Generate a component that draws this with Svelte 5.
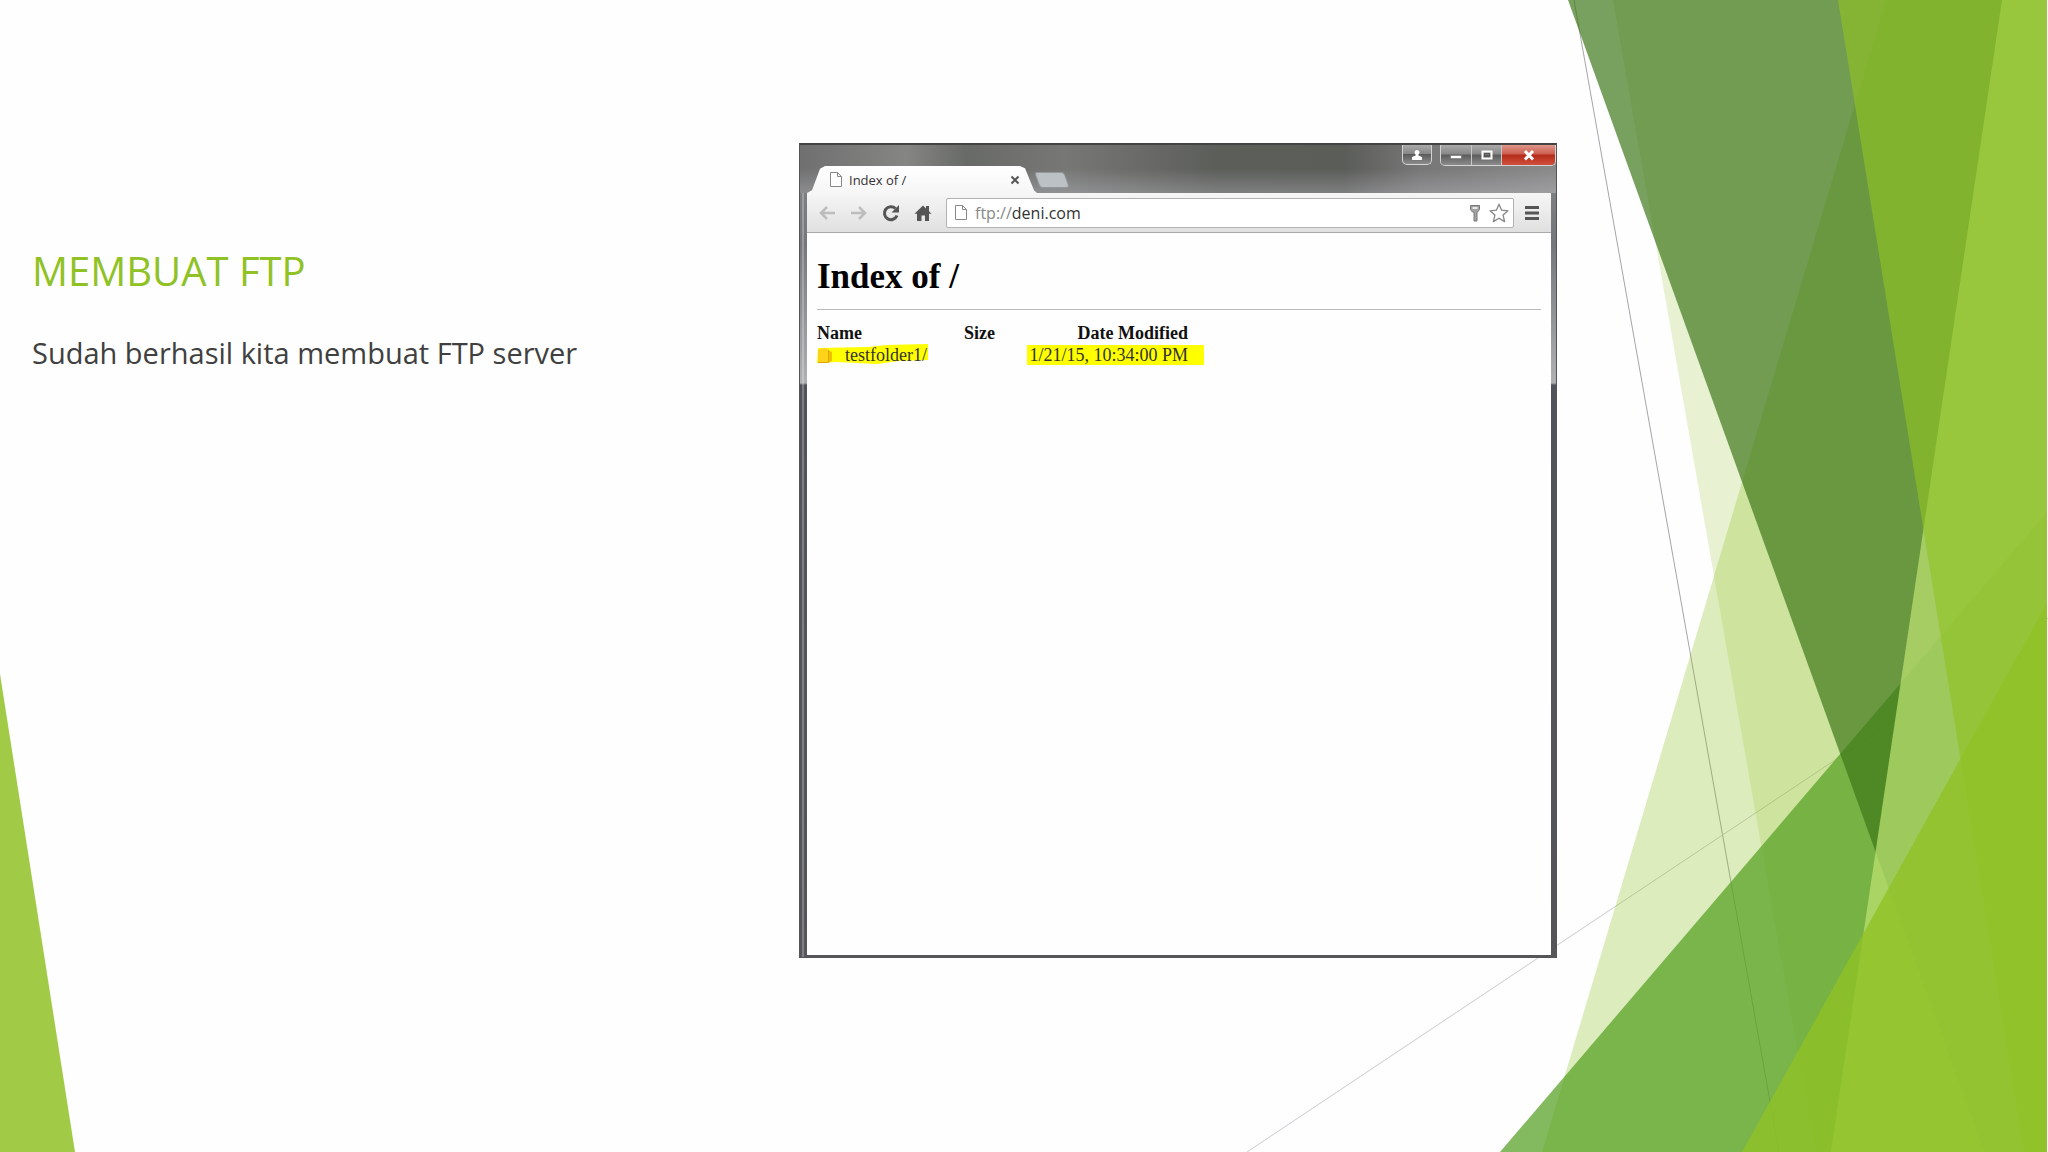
<script lang="ts">
  let address = $state('deni.com')

  const files = [
    { name: 'testfolder1/', size: '', modified: '1/21/15, 10:34:00 PM' },
  ]
</script>

{#snippet page()}
  <svg class="page-icon" viewBox="0 0 14 17" aria-hidden="true">
    <path d="M1.5 1.5h7l4 4v10h-11z M8.5 1.5v4h4" />
  </svg>
{/snippet}

<main class="slide">
  <svg class="facets" viewBox="0 0 2048 1152" preserveAspectRatio="none" aria-hidden="true">
    <path d="M1574 0L1779 1152" stroke="#a6a3aa" />
    <path d="M1247 1152L2048 618" stroke="#cdc9d0" />
    <path d="M1886 0H2047V1152H1542z" fill="#90c226" fill-opacity="0.3" />
    <path d="M1613 0H2047V1152H1815z" fill="#90c226" fill-opacity="0.2" />
    <path d="M1500 1152L2047 512V1152z" fill="#54a021" fill-opacity="0.72" />
    <path d="M1568 0H2047V1152H1984z" fill="#3f7819" fill-opacity="0.7" />
    <path d="M2002 0H2047V1152H1831z" fill="#c0e474" fill-opacity="0.7" />
    <path d="M1838 0H2047V1152H2024z" fill="#90c226" fill-opacity="0.65" />
    <path d="M1742 1152L2047 603V1152z" fill="#90c226" fill-opacity="0.8" />
    <path d="M0 674L75 1152H0z" fill="#90c226" fill-opacity="0.85" />
  </svg>

  <section class="copy">
    <h1>MEMBUAT FTP</h1>
    <p>Sudah berhasil kita membuat FTP server</p>
  </section>

  <section class="window">
    <header class="titlebar">
      <div class="tab">
        {@render page()}
        <span>Index of /</span>
        <button class="tab-close" aria-label="Close tab">
          <svg viewBox="0 0 10 10"><path d="M1.5 1.5l7 7m0-7l-7 7" /></svg>
        </button>
      </div>
      <button class="new-tab" aria-label="New tab"></button>
      <div class="controls">
        <button class="user" aria-label="User">
          <svg viewBox="0 0 12 12"><path d="M6 1a2.4 2.4 0 0 1 1.4 4.4v1.1l3.6 1.500v3H1V8l3.600-1.500V5.400A2.400 2.400 0 0 1 6 1z" fill="#fff" /></svg>
        </button>
        <div class="group">
          <button aria-label="Minimize">
            <svg viewBox="0 0 14 12"><path d="M1.5 6.5h11v3h-11z" fill="#fff" stroke="#666" stroke-width="0.5" /></svg>
          </button>
          <button aria-label="Maximize">
            <svg viewBox="0 0 14 12"><path d="M2.5 2.5h9v7h-9z" fill="none" stroke="#fff" stroke-width="2" /><path d="M4.5 4.5h5v3h-5z" fill="none" stroke="#555" /></svg>
          </button>
          <button class="close" aria-label="Close">
            <svg viewBox="0 0 14 12"><path d="M3 2l8 8.5M11 2l-8 8.5" stroke="#fff" stroke-width="3" /></svg>
          </button>
        </div>
      </div>
    </header>

    <div class="body">
      <nav class="toolbar">
        <button aria-label="Back">
          <svg viewBox="0 0 18 18"><path d="M17 9H3M9 3L3 9l6 6" fill="none" stroke="#bdbdbd" stroke-width="2.5" /></svg>
        </button>
        <button aria-label="Forward">
          <svg viewBox="0 0 18 18"><path d="M1 9h14M9 3l6 6-6 6" fill="none" stroke="#bdbdbd" stroke-width="2.5" /></svg>
        </button>
        <button aria-label="Reload">
          <svg viewBox="0 0 18 18"><path d="M15 11.5A6.5 6.5 0 1 1 13.5 4.5" fill="none" stroke="#555" stroke-width="3" /><path d="M17 1v7.5H9.5z" fill="#555" /></svg>
        </button>
        <button aria-label="Home">
          <svg viewBox="0 0 18 18"><path d="M9 1.5l3 2.9V2h3v5.2l2.5 2.6H15V17h-4v-5.5H7.5V17H3V9.8H.5z" fill="#555" /></svg>
        </button>
        <div class="address">
          {@render page()}
          <label for="address">ftp://</label>
          <input id="address" type="text" bind:value={address} />
          <button class="key" aria-label="Saved passwords">
            <svg viewBox="0 0 12 18"><path d="M1.5 1.5h9v4L8.500 8H8v9H5V8H3.500l-2-2.500z" fill="#a4a4a4" stroke="#777" /><path d="M3.5 4h5" stroke="#fff" stroke-width="1.5" /></svg>
          </button>
          <button class="star" aria-label="Bookmark">
            <svg viewBox="0 0 20 20"><path d="M10 1.2l2.6 6 6.4.6-4.9 4.3 1.5 6.5L10 15.200l-5.600 3.400 1.500-6.500L1 7.800l6.400-.6z" fill="#fff" stroke="#868686" stroke-width="1.3" stroke-linejoin="round" /></svg>
          </button>
        </div>
        <button class="menu" aria-label="Menu">
          <svg viewBox="0 0 18 18"><path d="M2 3.500h14M2 9h14M2 14.500h14" stroke="#555" stroke-width="3" /></svg>
        </button>
      </nav>

      <div class="listing">
        <h2>Index of /</h2>
        <table>
          <thead>
            <tr>
              <th class="name">Name</th>
              <th class="size">Size</th>
              <th class="date">Date Modified</th>
            </tr>
          </thead>
          <tbody>
            {#each files as file}
              <tr>
                <td>
                  <a href="#{file.name}">
                    <svg class="marker" viewBox="0 0 112 20" preserveAspectRatio="none" aria-hidden="true">
                      <path d="M1 4L50 3 70 1 111 0V16L82 17 60 20 20 18 0 19z" fill="#ff0" />
                    </svg>
                    <svg class="folder" viewBox="0 0 16 17" aria-hidden="true">
                      <path d="M1 2.500l6-1.500 4 1v14H1z" fill="#ffd21a" />
                      <path d="M11 3l4 2v9l-4 2z" fill="#f0c000" />
                      <path d="M11.500 3v12.500M1 15.500h10" stroke="#dba800" />
                    </svg>
                    <span>{file.name}</span>
                  </a>
                </td>
                <td class="size">{file.size}</td>
                <td class="date"><mark>{file.modified}</mark></td>
              </tr>
            {/each}
          </tbody>
        </table>
      </div>
    </div>
  </section>
</main>

<style>
  :global(body) {
    margin: 0;
    background: #fefefe;
  }
  .slide {
    position: relative;
    display: grid;
    grid-template-columns: 799fr 758fr 491fr;
    align-items: start;
    box-sizing: border-box;
    min-height: 100vh;
    padding: 143px 0;
    overflow: hidden;
  }
  .facets {
    position: absolute;
    inset: 0;
    width: 100%;
    height: 100%;
  }
  .copy {
    position: relative;
    padding: 98px 32px 0;
    font-family: 'Trebuchet MS', 'Open Sans', sans-serif;
  }
  h1 {
    margin: 0;
    font-size: 40px;
    line-height: 60px;
    font-weight: 400;
    color: #90c226;
  }
  p {
    margin: 32px 0 0;
    font-size: 29px;
    line-height: 40px;
    color: #404040;
  }
  button {
    display: flex;
    align-items: center;
    justify-content: center;
    padding: 0;
    border: none;
    background: none;
    cursor: pointer;
  }

  .window {
    position: relative;
    display: flex;
    flex-direction: column;
    box-sizing: border-box;
    min-width: 0;
    aspect-ratio: 758 / 815;
    border: 1px solid #555;
    border-top: 2px solid #444;
    background:
      linear-gradient(90deg, rgba(255, 255, 255, 0) 2px, rgba(255, 255, 255, 0.5) 3px, rgba(255, 255, 255, 0) 4px),
      linear-gradient(#868686, #74777c 100px, #aeb0b2 238px, #50545a 240px, #55555a);
  }
  .titlebar {
    display: flex;
    align-items: flex-end;
    height: 48px;
    padding: 0 0 0 7px;
    background:
      linear-gradient(rgba(255, 255, 255, 0) 50%, rgba(205, 205, 215, 0.3)),
      linear-gradient(90deg, #6f706f, #858683 14%, #686a68 22%, #777876 35%, #5c5e5a 55%, #5b5d59 72%, #777 82%, #8a8a8a);
  }
  .tab {
    display: flex;
    align-items: center;
    box-sizing: border-box;
    width: 230px;
    height: 27px;
    padding: 0 17px 0 22px;
    background: linear-gradient(#fff, #f6f6f6);
    clip-path: polygon(0 100%, 5px 90%, 13px 10%, 18px 0, 213px 0, 218px 8%, 227px 90%, 230px 100%);
    font: 13px 'Open Sans', sans-serif;
    color: #333;
  }
  .tab span {
    flex: 1;
    padding-left: 6px;
  }
  .page-icon {
    flex: none;
    width: 14px;
    height: 17px;
    fill: #fff;
    stroke: #888;
  }
  .tab-close svg {
    width: 10px;
    height: 10px;
    stroke: #555;
    stroke-width: 2;
  }
  .new-tab {
    width: 30px;
    height: 16px;
    margin: 0 0 5px;
    background: #bcc1c5;
    border: 1px solid #92979b;
    border-radius: 3px;
    transform: skewX(20deg);
  }
  .controls {
    display: flex;
    align-self: flex-start;
    gap: 8px;
    margin-left: auto;
  }
  .controls button {
    width: 30px;
    height: 20px;
    background: linear-gradient(#aaa, #888 45%, #5c5c5c 50%, #8c8c8c);
  }
  .controls .user,
  .group {
    border: 1px solid #d4d4d4;
    border-top: none;
    border-radius: 0 0 5px 5px;
    overflow: hidden;
  }
  .group {
    display: flex;
  }
  .group button + button {
    border-left: 1px solid #c8c8c8;
  }
  .group .close {
    width: 54px;
    background: linear-gradient(#dd968b, #cd5f50 45%, #b42c19 50%, #d0503d);
  }
  .controls svg {
    width: 14px;
    height: 12px;
  }

  .body {
    display: flex;
    flex: 1;
    flex-direction: column;
    margin: 0 5px 2px 7px;
    background: #fefefe;
  }
  .toolbar {
    display: flex;
    align-items: center;
    gap: 14px;
    box-sizing: border-box;
    height: 40px;
    padding: 0 10px 0 11px;
    border-bottom: 1px solid #aaa;
    background: linear-gradient(#f6f6f6, #e0e0e0);
  }
  .toolbar svg {
    width: 18px;
    height: 18px;
  }
  .address {
    display: flex;
    flex: 1;
    align-items: center;
    box-sizing: border-box;
    min-width: 0;
    height: 30px;
    padding: 0 4px 0 7px;
    border: 1px solid #b2b2b2;
    border-radius: 2px;
    background: #fff;
    font: 16px 'Open Sans', sans-serif;
  }
  .address .page-icon {
    width: 14px;
    height: 17px;
  }
  label {
    padding-left: 7px;
    color: #888;
  }
  input {
    flex: 1;
    min-width: 0;
    padding: 0;
    border: none;
    outline: none;
    background: none;
    font: inherit;
    color: #333;
  }
  .address .key svg {
    width: 12px;
  }
  .address .star svg {
    width: 20px;
    height: 20px;
  }
  .star {
    margin-left: 8px;
  }
  .menu {
    margin-left: -5px;
  }

  .listing {
    padding: 24px 10px;
    font-family: 'Liberation Serif', serif;
    color: #111;
  }
  h2 {
    margin: 0 0 12px;
    padding-bottom: 12px;
    border-bottom: 1px solid #bbb;
    font-size: 35px;
    line-height: 40px;
    color: #000;
  }
  table {
    border-collapse: collapse;
    font-size: 18px;
    line-height: 22px;
  }
  th,
  td {
    padding: 0;
    text-align: left;
  }
  .name {
    width: 112px;
  }
  th.size {
    width: 66px;
    text-align: right;
  }
  .date {
    width: 209px;
    text-align: right;
  }
  th.date {
    box-sizing: border-box;
    padding-right: 16px;
  }
  a {
    position: relative;
    display: flex;
    align-items: center;
    gap: 12px;
    color: #333;
    text-decoration: none;
  }
  a span {
    position: relative;
  }
  .marker {
    position: absolute;
    inset: 0;
    width: 100%;
    height: 20px;
  }
  .folder {
    position: relative;
    width: 16px;
    height: 17px;
  }
  mark {
    padding: 0 16px 0 2px;
    background: #ff0;
    color: #333;
  }
</style>
